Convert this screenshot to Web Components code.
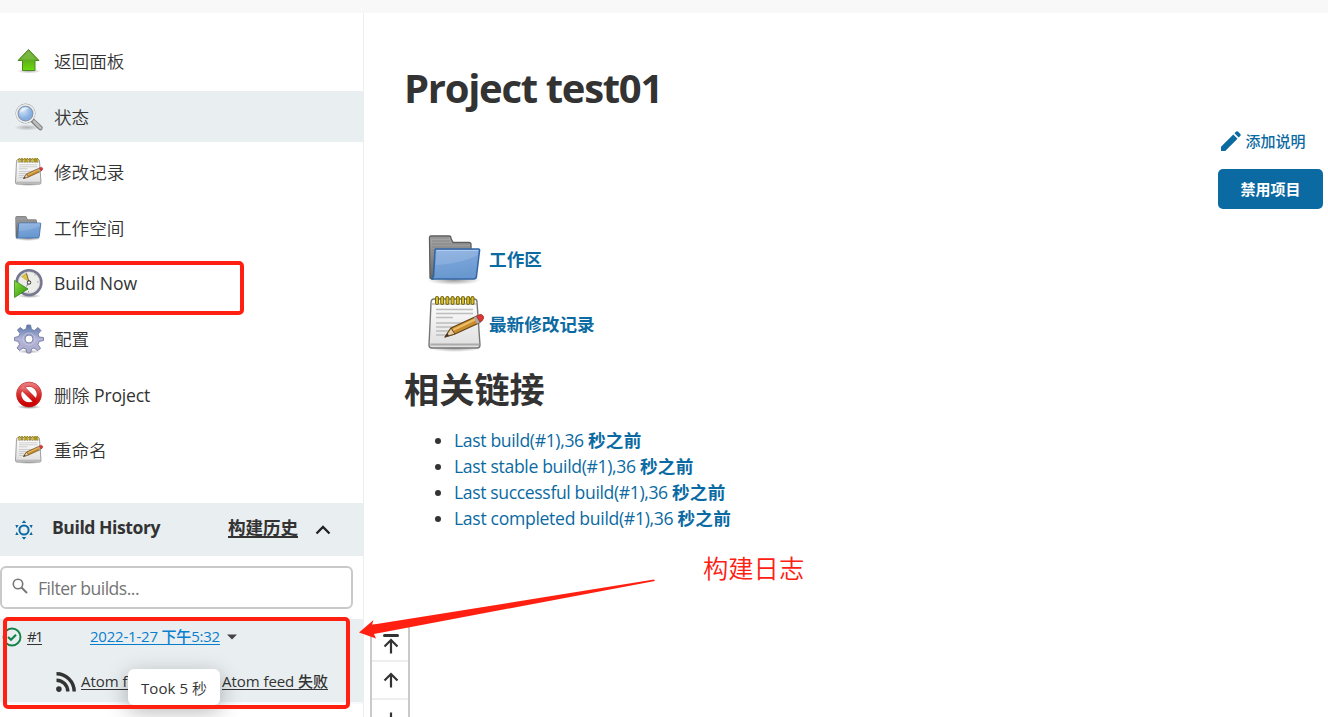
<!DOCTYPE html>
<html lang="zh">
<head>
<meta charset="utf-8">
<title>Project test01</title>
<style>
html,body{margin:0;height:717px;overflow:hidden;background:#fff}
body{font-family:"Open Sans","Noto Sans CJK SC",sans-serif;font-size:17.6px;color:#333}
</style>
</head>
<body>
<project-page></project-page>
<script>
const ICONS = {
  up: `<svg viewBox="0 0 60 60"><defs><radialGradient id="s"><stop stop-color="#777" stop-opacity=".6"/><stop offset="1" stop-color="#777" stop-opacity="0"/></radialGradient><linearGradient id="g" x2="0" y2="1"><stop stop-color="#72a838"/><stop offset=".5" stop-color="#5fae1c"/><stop offset="1" stop-color="#6cdb0c"/></linearGradient></defs><ellipse cx="30" cy="50" rx="24" ry="5" fill="url(#s)"/><path d="M29 7 50 29H42V49H17V29H8Z" fill="url(#g)" stroke="#4b8a22" stroke-width="2" stroke-linejoin="round"/><path d="M29 10 45 27H13Z" fill="#fff" opacity=".12"/></svg>`,
  search: `<svg viewBox="0 0 60 60"><defs><radialGradient id="s"><stop stop-color="#777" stop-opacity=".5"/><stop offset="1" stop-color="#777" stop-opacity="0"/></radialGradient><radialGradient id="g" cx=".35" cy=".3"><stop stop-color="#d8e8fa"/><stop offset="1" stop-color="#86aee0"/></radialGradient></defs><ellipse cx="26" cy="51" rx="26" ry="6" fill="url(#s)"/><path d="M37 37 53 52" stroke="#777" stroke-width="9" stroke-linecap="round"/><path d="M40 39 53 52" stroke="#bfbfbd" stroke-width="5.5" stroke-linecap="round"/><circle cx="52" cy="51" r="2" fill="#eee" stroke="#888"/><circle cx="23" cy="23" r="17" fill="url(#g)" stroke="#9a9a98" stroke-width="6"/><circle cx="23" cy="23" r="17.5" fill="none" stroke="#eee" stroke-width="3.5"/><circle cx="23" cy="23" r="14.5" fill="none" stroke="#7395c5" stroke-width="1.3"/><path d="M12 22A11 11 0 0 1 29 13Q15 18 12 22Z" fill="#fff" opacity=".6"/></svg>`,
  notepad: `<svg viewBox="0 0 60 60"><defs><radialGradient id="s"><stop stop-color="#555" stop-opacity=".6"/><stop offset="1" stop-color="#555" stop-opacity="0"/></radialGradient><linearGradient id="p" x2="0" y2="1"><stop stop-color="#fff"/><stop offset="1" stop-color="#dedede"/></linearGradient></defs><ellipse cx="29" cy="54" rx="27" ry="4" fill="url(#s)"/><path d="M8 5Q5 5 5 9L3 51Q3 54 6 54H51Q54 54 54 51L51 8Q51 5 48 5Z" fill="url(#p)" stroke="#777" stroke-width="1.4"/><path d="M6 10H50" stroke="#999"/><path d="M4.5 50.5H53" stroke="#aaa" stroke-width="2"/><path d="M10 15.5H47M10 19.5H47M10 23.5H27M10 29H46M10 33H38M10 37H34M10 41H22" stroke="#bdbdbd" stroke-width="1.4"/><path d="M11 4V9M16.2 4V9M21.4 4V9M26.6 4V9M31.8 4V9M37 4V9M42.2 4V9M46.5 4V9" stroke="#76650b" stroke-width="4" stroke-linecap="round"/><path d="M11 4V9M16.2 4V9M21.4 4V9M26.6 4V9M31.8 4V9M37 4V9M42.2 4V9M46.5 4V9" stroke="#d8c02d" stroke-width="2" stroke-linecap="round"/><path d="M19 43 25 34 51 22 56 26 53 29 29 40Z" fill="#c88d2c" stroke="#66451b" stroke-width="1.3" stroke-linejoin="round"/><path d="M27 36 50 25" stroke="#edbd68" stroke-width="2"/><path d="M19 43 25 34 29 40Z" fill="#e7cda2" stroke="#66451b"/><path d="M19 43 21.4 39.6 23 41.6Z" fill="#333"/><path d="M48 23.5 51 22 54.3 28.3 51 30Z" fill="#aaa"/><path d="M50.5 22.3Q56 18.5 57.5 23Q58 26 54 28Z" fill="#e33434" stroke="#a33a32"/></svg>`,
  folder: `<svg viewBox="0 0 60 60"><defs><radialGradient id="s"><stop stop-color="#555" stop-opacity=".6"/><stop offset="1" stop-color="#555" stop-opacity="0"/></radialGradient><linearGradient id="b" x2=".2" y2="1"><stop stop-color="#86ace0"/><stop offset="1" stop-color="#6898cf"/></linearGradient><linearGradient id="k" x2="0" y2="1"><stop stop-color="#aaa"/><stop offset="1" stop-color="#666"/></linearGradient></defs><ellipse cx="28" cy="51" rx="27" ry="5" fill="url(#s)"/><path d="M4 49 3.500 9Q3.500 7 5 7H23Q25 7 25 9.500L27 13.500H43Q45 13.500 45 15.500V25H9L7 50Z" fill="url(#k)" stroke="#5d5d5d" stroke-width="1.3"/><path d="M5 9H23M6 12H24M6 15H43M6 18H44M6 21H8M6 24H8M6 27H8M6 30H8" stroke="#858585" stroke-width=".9"/><path d="M9.500 20H52.500Q54 20 53.500 22L50.500 47Q50.500 50 47.500 50H5Q7.500 49 7.700 46L9 21Z" fill="url(#b)" stroke="#3365a4" stroke-width="1.5"/><path d="M10.500 21.500H52L51.500 26Q38 34 9.500 36Z" fill="#fff" opacity=".13"/><path d="M10.500 21.500H52" stroke="#b0cbed"/></svg>`,
  build: `<svg viewBox="0 0 60 60"><defs><radialGradient id="s"><stop stop-color="#555" stop-opacity=".6"/><stop offset="1" stop-color="#555" stop-opacity="0"/></radialGradient><linearGradient id="g" x2="1" y2="1"><stop stop-color="#8be13c"/><stop offset="1" stop-color="#2e8d0b"/></linearGradient></defs><ellipse cx="31" cy="56" rx="24" ry="4" fill="url(#s)"/><circle cx="30" cy="29" r="24.500" fill="#ecece9" stroke="#76768e" stroke-width="5.500"/><circle cx="30" cy="29" r="21.500" fill="none" stroke="#c7c7cc"/><path d="M15 17 25 10 30 28Z" fill="#e2c442" stroke="#ad922a"/><path d="M25 11 30 28M30 28 25 37" stroke="#555" stroke-width="1.500"/><circle cx="30" cy="29" r="3.500" fill="#f5f5f5" stroke="#333" stroke-width="2"/><path d="M46 28H49M29 46V49M42 13V15" stroke="#999" stroke-width="2"/><path d="M1 25 28 42 1 59Z" fill="url(#g)" stroke="#327b19" stroke-width="1.500"/></svg>`,
  gear: `<svg viewBox="0 0 60 60"><defs><radialGradient id="s"><stop stop-color="#555" stop-opacity=".5"/><stop offset="1" stop-color="#555" stop-opacity="0"/></radialGradient><linearGradient id="g" x2="0" y2="1"><stop stop-color="#5577aa"/><stop offset=".5" stop-color="#b4b5d8"/><stop offset="1" stop-color="#aaaac9"/></linearGradient></defs><ellipse cx="30" cy="55" rx="24" ry="4" fill="url(#s)"/><path fill-rule="evenodd" d="M26 2H33L35 11 41 13 48 7 54 13 48 20 50 26 59 27V33L50 35 48 41 53 49 47 53 40 48 35 50 33 58H26L24 50 18 48 11 53 6 48 11 41 9 35 1 33V27L9 25 12 19 7 12 12 7 19 12 24 10ZM30 22A8 8 0 1 0 30 38A8 8 0 1 0 30 22Z" fill="url(#g)" stroke="#747ba3" stroke-width="1.800" stroke-linejoin="round"/><circle cx="30" cy="30" r="12" fill="none" stroke="#d8d9e9" stroke-width="1.300" opacity=".8"/></svg>`,
  forbid: `<svg viewBox="0 0 60 60"><defs><radialGradient id="s"><stop stop-color="#555" stop-opacity=".7"/><stop offset="1" stop-color="#555" stop-opacity="0"/></radialGradient><linearGradient id="g" x2="0" y2="1"><stop stop-color="#e87777"/><stop offset=".5" stop-color="#d92d2d"/><stop offset="1" stop-color="#ce0000"/></linearGradient></defs><ellipse cx="30" cy="54" rx="25" ry="4" fill="url(#s)"/><g fill="none" stroke="#b52a2a" stroke-width="10"><circle cx="30" cy="29" r="20.500"/><path d="M16 15 44 43"/></g><g fill="none" stroke="url(#g)" stroke-width="8"><circle cx="30" cy="29" r="20.500"/><path d="M16 15 44 43"/></g></svg>`,
  weather: `<svg viewBox="0 0 20 20"><circle cx="10" cy="10" r="4.600" fill="none" stroke="#0b6aa2" stroke-width="2"/><path d="M10 .3 12.300 3H7.700ZM10 19.700 12.300 17H7.700ZM1.300 5 4.600 5.100 2.700 8.300ZM1.300 15 4.600 14.900 2.700 11.700ZM18.700 5 15.400 5.100 17.300 8.300ZM18.700 15 15.400 14.900 17.300 11.700Z" fill="#0b6aa2"/></svg>`,
  chevron: `<svg viewBox="0 0 16 16"><path d="M1.500 11.500 8 5 14.500 11.500" fill="none" stroke="#222" stroke-width="2.300"/></svg>`,
  lens: `<svg viewBox="0 0 16 16"><circle cx="6" cy="6" r="4.700" fill="none" stroke="#777" stroke-width="1.600"/><path d="M9.500 9.500 15 15" stroke="#777" stroke-width="2"/></svg>`,
  ok: `<svg viewBox="0 0 20 20"><circle cx="10" cy="10" r="8.500" fill="none" stroke="#138347" stroke-width="1.900"/><path d="M6 10 9 12.800 14 7.700" fill="none" stroke="#138347" stroke-width="2.200"/></svg>`,
  caret: `<svg viewBox="0 0 10 6"><path d="M0 .5H10L5 5.500Z" fill="#444"/></svg>`,
  rss: `<svg viewBox="0 0 20 20"><circle cx="2.900" cy="17.100" r="2.800" fill="#333"/><path d="M.5 8.200A11.300 11.300 0 0 1 11.800 19.500M.5 1.800A17.700 17.700 0 0 1 18.200 19.500" fill="none" stroke="#333" stroke-width="3.400"/></svg>`,
  pencil: `<svg viewBox="0 0 20 20"><path d="M0 20V15.800L12.300 3.500 16.500 7.700 4.200 20ZM13.500 2.300 15.200.6Q16 -.2 16.900.6L19.400 3.100Q20.200 4 19.400 4.800L17.700 6.500Z" fill="#0b6aa2"/></svg>`,
  top: `<svg viewBox="0 0 16 20"><path d="M1.500 1.500H14.500" stroke="#333" stroke-width="3" stroke-linecap="round"/><path d="M8 19.500V6M1.500 12.500 8 6 14.500 12.500" fill="none" stroke="#333" stroke-width="2.200"/></svg>`,
  arrow: `<svg viewBox="0 0 16 16"><path d="M8 15.500V2M1.500 8.500 8 2 14.500 8.500" fill="none" stroke="#333" stroke-width="2.200"/></svg>`,
  down: `<svg viewBox="0 0 16 16"><path d="M8 .5V14M1.500 8 8 14.500 14.500 8" fill="none" stroke="#333" stroke-width="2.200"/></svg>`
};
function define(name, html, after) {
  const t = document.createElement('template');
  t.innerHTML = html;
  customElements.define(name, class extends HTMLElement {
    connectedCallback() {
      if (this.shadowRoot) return;
      this.attachShadow({mode: 'open'}).append(t.content.cloneNode(true));
      if (after) after(this, this.shadowRoot);
    }
  });
}

/* Line of text with its tracking adjusted to the width in the w attribute. */
define('fit-text', `<style>:host{display:inline-block;white-space:pre;flex:none}span{display:inline-block}:host([u]) span{text-decoration:underline;text-decoration-thickness:var(--ut,1px);text-underline-offset:2px;text-decoration-skip-ink:none}</style><span><slot></slot></span>`, (el, r) => {
  const w = parseFloat(el.getAttribute('w')), s = r.querySelector('span');
  if (!w) return;
  s.style.letterSpacing = (w - s.getBoundingClientRect().width) / [...el.textContent].length + 'px';
  el.style.width = w + 'px';
});

define('ui-icon', `<style>:host{display:block;flex:none}svg{display:block;width:100%;height:100%;overflow:visible}</style>`, (el, r) => {
  r.innerHTML += ICONS[el.getAttribute('name')];
  el.style.width = el.getAttribute('w') + 'px';
  el.style.height = (el.getAttribute('h') || el.getAttribute('w')) + 'px';
});

define('side-task', `<style>
:host{display:flex;align-items:center;height:51px;padding-left:14px;gap:10px;box-sizing:border-box;font-weight:500}
:host([active]){background:#e9eef1}
::slotted(ui-icon){margin-top:1px}
</style><slot name="icon"></slot><slot></slot>`);

define('build-history', `<style>
:host{display:block;margin-top:28px}
header{display:flex;align-items:center;height:53px;background:#e9eef1;font-weight:700;padding-left:14px;box-sizing:border-box}
header fit-text{margin-bottom:6px}
.trend{margin-left:68px;--ut:2px}
.filter{display:flex;align-items:center;box-sizing:border-box;width:353px;height:43px;margin:10px 0;border:2px solid #c9c9c9;border-radius:6px;padding-left:10px;gap:10px;color:#757575}
.filter ui-icon{margin-bottom:3px}
.builds{height:83px;background:#e9eef1;border-bottom:2px solid #f7f9fa;font-size:15px;box-sizing:content-box}
.row,.feeds{display:flex;align-items:center}
.row{height:35px;padding-left:2px}
.row a{margin-bottom:2px}
.feeds{height:20px;margin-top:18px;padding-left:56px;font-weight:500}
.feeds a{margin-bottom:4px}
.date{color:#087fcd;margin-left:48px}
</style>
<header><ui-icon name="weather" w="20"></ui-icon><fit-text w="108" style="margin-left:18px">Build History</fit-text><a class="trend"><fit-text u w="70">构建历史</fit-text></a><ui-icon name="chevron" w="16" style="margin-left:17px"></ui-icon></header>
<div class="filter"><ui-icon name="lens" w="16"></ui-icon><fit-text w="101">Filter builds...</fit-text></div>
<div class="builds">
<div class="row"><ui-icon name="ok" w="20"></ui-icon><a style="margin-left:5px"><fit-text u w="15">#1</fit-text></a><a class="date"><fit-text u w="130" style="font-weight:500">2022-1-27 下午5:32</fit-text></a><ui-icon name="caret" w="10" h="6" style="margin-left:7px"></ui-icon></div>
<div class="feeds"><ui-icon name="rss" w="20"></ui-icon><a style="margin-left:5px"><fit-text u w="106">Atom feed 全部</fit-text></a><a style="margin-left:35px"><fit-text u w="106">Atom feed 失败</fit-text></a></div>
</div>`);

define('side-panel', `<style>
:host{display:block;width:363px;border-right:1px solid #e9eef1;padding-top:22px;box-sizing:content-box}
nav{display:flex;flex-direction:column;gap:4.6px}
.cjk{font-weight:350}
</style>
<nav>
<side-task><ui-icon slot="icon" name="up" w="30"></ui-icon><fit-text class="cjk" w="70.4">返回面板</fit-text></side-task>
<side-task active><ui-icon slot="icon" name="search" w="30"></ui-icon><fit-text class="cjk" w="35.2">状态</fit-text></side-task>
<side-task><ui-icon slot="icon" name="notepad" w="30"></ui-icon><fit-text class="cjk" w="70.4">修改记录</fit-text></side-task>
<side-task><ui-icon slot="icon" name="folder" w="30"></ui-icon><fit-text class="cjk" w="70.4">工作空间</fit-text></side-task>
<side-task><ui-icon slot="icon" name="build" w="30"></ui-icon><fit-text w="83">Build Now</fit-text></side-task>
<side-task><ui-icon slot="icon" name="gear" w="30"></ui-icon><fit-text class="cjk" w="35.2">配置</fit-text></side-task>
<side-task><ui-icon slot="icon" name="forbid" w="30"></ui-icon><span><fit-text class="cjk" w="40">删除 </fit-text><fit-text w="56">Project</fit-text></span></side-task>
<side-task><ui-icon slot="icon" name="notepad" w="30"></ui-icon><fit-text class="cjk" w="52.8">重命名</fit-text></side-task>
</nav>
<build-history></build-history>`);

define('build-link', `<style>:host{display:list-item;height:26px;line-height:26px}a{color:#0b6aa2;font-weight:500}b{font-weight:700}</style><a><slot></slot><b><fit-text w="53.500">秒之前</fit-text></b></a>`);

define('project-main', `<style>
:host{display:block;flex:1;padding:46px 5px 0 40px}
h1{margin:0;height:58px;line-height:58px;font-size:40px;font-weight:700}
.actions{display:flex;flex-direction:column;align-items:flex-end;margin-top:12px;gap:16px;font-size:15px}
.edit{display:flex;align-items:center;height:24px;gap:5px;margin-right:17px;color:#0b6aa2;font-weight:500}
.edit fit-text{margin:0 .5px 2px -.5px}
button{display:block;width:105px;height:40px;border:0;border-radius:5px;background:#0b6aa2;color:#fff;font:700 15px "Noto Sans CJK SC",sans-serif;padding:0 0 2px}
.links{margin:20px 0 0 22px;display:grid;gap:5px}
.links a{display:flex;align-items:center;height:60px;gap:3px;color:#0b6aa2;font-weight:700}
.links fit-text{margin-bottom:2px}
h2{margin:11px 0 14px;height:48px;line-height:48px;font-size:35.2px;font-weight:700}
ul{margin:0;padding:0 0 0 50px;list-style:disc}
</style>
<h1><fit-text w="258">Project test01</fit-text></h1>
<div class="actions"><a class="edit"><ui-icon name="pencil" w="20"></ui-icon><fit-text w="60">添加说明</fit-text></a><button>禁用项目</button></div>
<div class="links"><a><ui-icon name="folder" w="60"></ui-icon><fit-text w="53">工作区</fit-text></a><a><ui-icon name="notepad" w="60"></ui-icon><fit-text w="105.6">最新修改记录</fit-text></a></div>
<h2><fit-text w="140.8">相关链接</fit-text></h2>
<ul>
<build-link><fit-text w="134">Last build(#1),36 </fit-text></build-link>
<build-link><fit-text w="186">Last stable build(#1),36 </fit-text></build-link>
<build-link><fit-text w="218">Last successful build(#1),36 </fit-text></build-link>
<build-link><fit-text w="223.500">Last completed build(#1),36 </fit-text></build-link>
</ul>`);

define('page-nav', `<style>
:host{position:absolute;left:370px;top:624px;width:36px;height:120px;border:2px solid #c9c9c9;border-radius:4px;background:#fff}
div{display:flex;align-items:center;justify-content:center;height:36px;border-bottom:2px solid #eee;padding-left:1px}
div:first-child{height:34px}
.t{padding-top:1px;box-sizing:border-box}
</style><div class="t"><ui-icon name="top" w="16" h="20"></ui-icon></div><div><ui-icon name="arrow" w="16"></ui-icon></div><div style="align-items:flex-start;padding-top:12px;box-sizing:border-box"><ui-icon name="down" w="16"></ui-icon></div>`);

define('hover-tip', `<style>:host{position:absolute;left:128px;top:669px;width:92px;height:36px;display:flex;align-items:center;justify-content:center;background:#fff;border-radius:6px;box-shadow:0 6px 22px rgba(0,0,0,.3);font-size:15px;padding-top:1px;box-sizing:border-box}</style><fit-text w="51">Took 5 </fit-text><fit-text w="15" style="font-weight:350">秒</fit-text>`);

define('mark-layer', `<style>
:host{position:absolute;inset:0;pointer-events:none}
i{position:absolute;box-sizing:border-box;border:4px solid #ff2012;border-radius:5px}
.a{left:4.500px;top:260.500px;width:239px;height:54px}
.b{left:2.500px;top:617px;width:347px;height:91.500px}
svg{position:absolute;left:0;top:0}
p{position:absolute;left:703px;top:549px;margin:0;font-size:25.300px;line-height:38px;color:#ff2012;font-weight:350}
</style><i class="a"></i><i class="b"></i>
<svg width="1328" height="717"><path d="M359 632.500 373.500 620 372 624.800 654 579.500 655 581 374 634 376 638.500Z" fill="#ff2012"/></svg>
<p><fit-text w="101.200">构建日志</fit-text></p>`);

define('project-page', `<style>
:host{display:block;position:relative;width:1328px;height:717px;overflow:hidden;background:#fff}
.bar{height:13px;background:#f8f8f8}
.body{display:flex;height:704px}
</style><div class="bar"></div><div class="body"><side-panel></side-panel><project-main></project-main></div><page-nav></page-nav><hover-tip></hover-tip><mark-layer></mark-layer>`);
</script>
</body>
</html>
